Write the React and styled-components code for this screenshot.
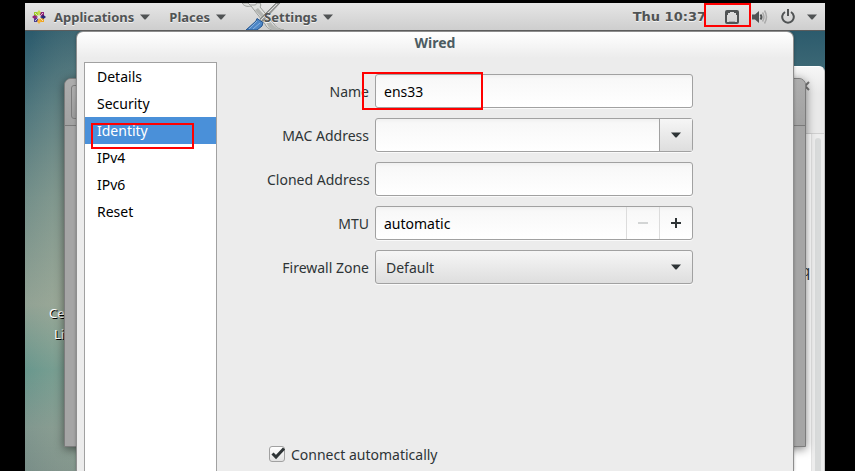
import React, { useState } from 'react';
import styled, { createGlobalStyle } from 'styled-components';


//<---Styling--->
const GlobalStyle = createGlobalStyle`
    * {
        box-sizing: border-box;
    }
    body {
        margin: 0;
        background: #000;
        font-family: 'Noto Sans', 'Open Sans', sans-serif;
        font-size: 14px;
        color: #2e3436;
    }
    button, input, select {
        font: inherit;
        color: inherit;
        margin: 0;
    }
`;
const Screen = styled.div`
    height: 100vh;
    padding: 3px 30px 0 25px;
    display: flex;
    flex-direction: column;
    overflow: hidden;
`;
const TopBar = styled.header`
    height: 28px;
    flex: none;
    padding: 0 8px 0 7px;
    display: flex;
    justify-content: space-between;
    align-items: stretch;
    background: linear-gradient(#e6e6e6, #cecece);
    border-bottom: 1px solid #5c5c5c;
    color: #505354;
    font-size: 13px;
    text-shadow: 0 1px #f2f2f2;
`;
const BarGroup = styled.nav`
    display: flex;
    align-items: center;
`;
const BarButton = styled.button`
    position: relative;
    height: 27px;
    padding: 0;
    margin-right: ${({ $gap }) => $gap || 0}px;
    border: 0;
    background: none;
    font-weight: bold;
    text-shadow: inherit;
    white-space: nowrap;
    display: flex;
    align-items: center;
    gap: 6px;
`;
const ClockButton = styled(BarButton)`
    font-family: 'DejaVu Sans', sans-serif;
`;
const LogoHolder = styled.span`
    display: flex;
    padding-right: 2px;
`;
const BarText = styled.span`
    position: relative;
`;
const ToolsArt = styled.svg`
    position: absolute;
    left: -22px;
    top: 0;
`;
const Desktop = styled.main`
    position: relative;
    flex: 1;
    overflow: hidden;
    background:
        radial-gradient(ellipse 60px 340px at 50px 240px, rgba(176, 184, 160, 0.45), transparent),
        linear-gradient(#2c5b6d, #4c747c 17%, #6f8c88 38%, #8fa093 62%, #64958c 77%, #7f968e 90%, #798e88);
`;
const DesktopLabel = styled.div`
    position: absolute;
    left: 24px;
    top: 272px;
    font-size: 13px;
    line-height: 21px;
    color: #fff;
    text-shadow: 1px 1px #000;
    span {
        display: block;
    }
    span + span {
        padding-left: 5px;
    }
`;
const RearWindow = styled.section`
    position: absolute;
    left: 420px;
    right: 0;
    top: 35px;
    bottom: 0;
    display: flex;
    flex-direction: column;
    border-radius: 6px 6px 0 0;
    border: 1px solid #c8c8c8;
    border-top-color: #fff;
    border-bottom: 0;
    background: #fff;
    overflow: hidden;
`;
const RearHeader = styled.div`
    height: 67px;
    flex: none;
    display: flex;
    justify-content: flex-end;
    padding: 14px 14px 0;
    background: linear-gradient(#f6f6f6, #e9e9e9 40%);
    border-bottom: 1px solid #d0d0d0;
`;
const CloseButton = styled.button`
    width: 10px;
    height: 10px;
    padding: 0;
    border: 0;
    background: none;
    display: flex;
`;
const RearBody = styled.div`
    flex: 1;
    display: flex;
    justify-content: flex-end;
`;
const RearText = styled.span`
    padding: 127px 1px 0 0;
`;
const Trough = styled.div`
    width: 13px;
    padding: 4px 3px 0;
    background: #ededed;
    border-left: 1px solid #e2e2e2;
    display: flex;
`;
const Thumb = styled.div`
    flex: 1;
    border-radius: 4px 4px 0 0;
    background: #d8dada;
`;
const GreyWindow = styled.section`
    position: absolute;
    left: 39px;
    right: 19px;
    top: 47px;
    height: 369px;
    border: 1px solid #7c7c7c;
    border-radius: 7px 7px 0 0;
    background: #a5a5a5;
    box-shadow: 0 2px 10px rgba(0, 0, 0, 0.5);
    overflow: hidden;
`;
const GreyHeader = styled.div`
    height: 47px;
    padding: 6px;
    background: linear-gradient(#adadad, #a2a2a2);
    border-bottom: 1px solid #7a7a7a;
`;
const GreyButton = styled.button`
    display: block;
    width: 34px;
    height: 34px;
    border: 1px solid #7c7c7c;
    border-radius: 3px;
    background: linear-gradient(#aeaeae, #9c9c9c);
`;
const Dialog = styled.section`
    position: absolute;
    left: 51px;
    right: 31px;
    top: 0;
    bottom: 0;
    display: flex;
    flex-direction: column;
    border: 1px solid #8e8e8e;
    border-bottom: 0;
    border-radius: 7px 7px 0 0;
    background: linear-gradient(#fff, #ececec 26px);
    box-shadow: 0 0 3px rgba(0, 0, 0, 0.3);
`;
const Title = styled.h1`
    margin: 0;
    height: 30px;
    line-height: 22px;
    font-size: 14px;
    text-align: center;
    color: #4c5c62;
`;
const DialogBody = styled.div`
    flex: 1;
    display: flex;
    padding-left: 7px;
`;
const Sidebar = styled.ul`
    width: 133px;
    flex: none;
    margin: 0;
    padding: 0;
    list-style: none;
    background: #fff;
    border: 1px solid #a1a1a1;
    border-bottom: 0;
`;
const SideItem = styled.li`
    position: relative;
    background: ${({ $active }) => ($active ? '#4a90d9' : 'transparent')};
`;
const SideButton = styled.button`
    display: block;
    width: 100%;
    height: 27px;
    padding: 0 12px;
    border: 0;
    background: none;
    text-align: left;
    color: ${({ $active }) => ($active ? '#fff' : '#000')};
`;
const Form = styled.form`
    flex: 1;
    padding: 12px 100px 6px 50px;
    display: flex;
    flex-direction: column;
    justify-content: space-between;
`;
const Fields = styled.div`
    display: grid;
    grid-template-columns: 102px 1fr;
    column-gap: 6px;
    row-gap: 10px;
    align-items: center;
`;
const Label = styled.label`
    text-align: right;
    white-space: nowrap;
`;
const Box = styled.div`
    position: relative;
    height: 34px;
    display: flex;
    border: 1px solid #a1a1a1;
    border-radius: 3px;
    background: ${({ $raised }) => ($raised
        ? 'linear-gradient(#f6f6f6, #dedede)'
        : 'linear-gradient(#f0f0f0, #f8f8f8 4px, #fff)')};
    box-shadow: 0 1px #fafafa;
`;
const Input = styled.input`
    flex: 1;
    min-width: 0;
    padding: 0 8px;
    border: 0;
    outline: 0;
    background: none;
    color: #000;
`;
const Select = styled.select`
    flex: 1;
    padding: 0 10px;
    border: 0;
    outline: 0;
    appearance: none;
    background: none;
`;
const BoxButton = styled.button`
    width: 33px;
    padding: 0;
    border: 0;
    border-left: 1px solid ${({ $raised }) => ($raised ? '#a1a1a1' : '#dcdcdc')};
    background: ${({ $raised }) => ($raised ? 'linear-gradient(#f6f6f6, #dedede)' : 'none')};
    color: ${({ disabled }) => (disabled ? '#d3d5d5' : '#2e3436')};
    display: flex;
    align-items: center;
    justify-content: center;
`;
const SelectArrow = styled.span`
    position: absolute;
    right: 11px;
    top: 10px;
    pointer-events: none;
    line-height: 0;
`;
const CheckRow = styled.label`
    display: flex;
    align-items: center;
    gap: 6px;
    height: 22px;
    padding-left: 2px;
`;
const CheckHolder = styled.span`
    position: relative;
    display: flex;
    svg {
        position: absolute;
        left: 0;
        top: 0;
        pointer-events: none;
    }
`;
const Checkbox = styled.input`
    width: 16px;
    height: 16px;
    appearance: none;
    border: 1px solid #a1a1a1;
    border-radius: 3px;
    background: linear-gradient(#fff, #e2e2e2);
`;
const Highlight = styled.span`
    position: absolute;
    z-index: 2;
    left: ${({ $left }) => $left}px;
    top: ${({ $top }) => $top}px;
    width: ${({ $width }) => $width}px;
    height: ${({ $height }) => $height}px;
    border: 2px solid #f00;
    pointer-events: none;
`;
//<---Styling ending--->


const Arrow = () => (
    <svg width="10" height="12" viewBox="0 0 10 12" aria-hidden="true">
        <path d="M0 3.5h10L5.500 8.500h-1z" fill="currentColor" />
    </svg>
);

const CentosLogo = () => (
    <svg width="14" height="14" viewBox="0 0 14 14" aria-hidden="true">
        <path d="M2 2h4v4H2z" fill="#9ccd2a" />
        <path d="M8 2h4v4H8z" fill="#932279" />
        <path d="M8 8h4v4H8z" fill="#efa724" />
        <path d="M2 8h4v4H2z" fill="#4a3f94" />
        <path d="M7 0l2 2.500L7 6 5 2.500z" fill="#c3d94e" />
        <path d="M14 7l-2.500 2L8 7l3.500-2z" fill="#262577" />
        <path d="M7 14l-2-2.500L7 8l2 3.500z" fill="#f3b43c" />
        <path d="M0 7l2.500-2L6 7 2.500 9z" fill="#932279" />
        <path d="M3 3l8 8M11 3l-8 8" stroke="#e8e8e8" strokeWidth="0.8" />
    </svg>
);

const Tools = () => (
    <ToolsArt width="42" height="27" viewBox="0 0 42 27" aria-hidden="true">
        <path d="M0 0c2 3 5 4 9 3l14 18c1 3 4 5 7 6h12c-6-1-8-3-10-6L18 4c1-1 1-3 0-4h-4c1 1 0 2-2 2H8L6 0z" fill="#e0e1df" stroke="#9b9d9a" />
        <path d="M16 5l15 17c3 3 6 4 10 5H31c-3-1-5-3-6-6L13 7z" fill="#b4b6b3" />
        <path d="M34 0h4L21 18l-3-2z" fill="#9a9c9a" stroke="#767876" strokeWidth="0.7" />
        <path d="M35 1L19 17" stroke="#dfdfdf" />
        <path d="M15 15.500l6 4-1 3.500-5 4H4l10-9z" fill="#4d86c6" stroke="#23558f" />
        <path d="M15 18l-8 8M18 20l-7 6" stroke="#89b2df" />
    </ToolsArt>
);

const NetworkIcon = () => (
    <svg width="14" height="14" viewBox="0 0 14 14" aria-hidden="true">
        <rect x="1" y="1" width="12" height="12" rx="1" fill="none" stroke="currentColor" strokeWidth="2" />
        <path d="M2 2h3v1H3v2H2zM12 2H9v1h2v2h1z" fill="currentColor" />
        <path d="M4 11.5h6" stroke="#aaa" />
    </svg>
);

const VolumeIcon = () => (
    <svg width="16" height="14" viewBox="0 0 16 14" aria-hidden="true">
        <path d="M0 4.500h3L7 1v12L3 9.500H0z" fill="currentColor" />
        <path d="M8.500 4.500q2 2.500 0 5" fill="none" stroke="currentColor" strokeWidth="2" />
        <path d="M10.500 2.500q3 4.500 0 9M12.500 0.500q4 6.500 0 13" fill="none" stroke="#aaa" strokeWidth="1.500" />
    </svg>
);

const PowerIcon = () => (
    <svg width="14" height="15" viewBox="0 0 14 15" aria-hidden="true">
        <path d="M4 3a5.800 5.800 0 1 0 6 0M7 0v7" fill="none" stroke="currentColor" strokeWidth="2" />
    </svg>
);

const PAGES = ['Details', 'Security', 'Identity', 'IPv4', 'IPv6', 'Reset'];

export default function App() {
    const [page, setPage] = useState('Identity');
    const [name, setName] = useState('ens33');
    const [mac, setMac] = useState('');
    const [cloned, setCloned] = useState('');
    const [mtu, setMtu] = useState('automatic');
    const [auto, setAuto] = useState(true);

    const sideItems = PAGES.map(item => (
        <SideItem key={item} $active={item === page}>
            <SideButton $active={item === page} onClick={() => setPage(item)}>{item}</SideButton>
            {item === 'Identity' && <Highlight $left={6} $top={6} $width={103} $height={26} />}
        </SideItem>
    ));

    return (
        <>
            <GlobalStyle />
            <Screen>
                <TopBar>
                    <BarGroup>
                        <BarButton $gap={19}><LogoHolder><CentosLogo /></LogoHolder>Applications <Arrow /></BarButton>
                        <BarButton $gap={38}>Places <Arrow /></BarButton>
                        <BarButton><Tools /><BarText>Settings</BarText> <Arrow /></BarButton>
                    </BarGroup>
                    <BarGroup>
                        <ClockButton $gap={19}>Thu 10:37</ClockButton>
                        <BarButton $gap={13} aria-label="Network">
                            <NetworkIcon />
                            <Highlight $left={-21} $top={0} $width={47} $height={24} />
                        </BarButton>
                        <BarButton $gap={13} aria-label="Volume"><VolumeIcon /></BarButton>
                        <BarButton $gap={12} aria-label="Power"><PowerIcon /></BarButton>
                        <BarButton aria-label="System menu"><Arrow /></BarButton>
                    </BarGroup>
                </TopBar>
                <Desktop>
                    <DesktopLabel><span>Ce</span><span>Li</span></DesktopLabel>
                    <RearWindow>
                        <RearHeader>
                            <CloseButton aria-label="Close">
                                <svg width="10" height="10" viewBox="0 0 10 10">
                                    <path d="M1 1l8 8M9 1l-8 8" stroke="#777" strokeWidth="2" />
                                </svg>
                            </CloseButton>
                        </RearHeader>
                        <RearBody>
                            <RearText>q</RearText>
                            <Trough><Thumb /></Trough>
                        </RearBody>
                    </RearWindow>
                    <GreyWindow>
                        <GreyHeader><GreyButton aria-label="Back" /></GreyHeader>
                    </GreyWindow>
                    <Dialog>
                        <Title>Wired</Title>
                        <DialogBody>
                            <Sidebar>{sideItems}</Sidebar>
                            <Form>
                                <Fields>
                                    <Label htmlFor="name">Name</Label>
                                    <Box>
                                        <Input id="name" value={name} onChange={e => setName(e.target.value)} />
                                        <Highlight $left={-14} $top={-3} $width={121} $height={38} />
                                    </Box>
                                    <Label htmlFor="mac">MAC Address</Label>
                                    <Box>
                                        <Input id="mac" value={mac} onChange={e => setMac(e.target.value)} />
                                        <BoxButton type="button" $raised aria-label="Choose address"><Arrow /></BoxButton>
                                    </Box>
                                    <Label htmlFor="cloned">Cloned Address</Label>
                                    <Box>
                                        <Input id="cloned" value={cloned} onChange={e => setCloned(e.target.value)} />
                                    </Box>
                                    <Label htmlFor="mtu">MTU</Label>
                                    <Box>
                                        <Input id="mtu" value={mtu} onChange={e => setMtu(e.target.value)} />
                                        <BoxButton type="button" disabled aria-label="Decrease">
                                            <svg width="10" height="10"><path d="M0 5h10" stroke="currentColor" strokeWidth="2" /></svg>
                                        </BoxButton>
                                        <BoxButton type="button" aria-label="Increase">
                                            <svg width="10" height="10"><path d="M0 5h10M5 0v10" stroke="currentColor" strokeWidth="2" /></svg>
                                        </BoxButton>
                                    </Box>
                                    <Label htmlFor="zone">Firewall Zone</Label>
                                    <Box $raised>
                                        <Select id="zone"><option>Default</option></Select>
                                        <SelectArrow><Arrow /></SelectArrow>
                                    </Box>
                                </Fields>
                                <CheckRow>
                                    <CheckHolder>
                                        <Checkbox type="checkbox" checked={auto} onChange={e => setAuto(e.target.checked)} />
                                        {auto && (
                                            <svg width="17" height="16" viewBox="0 0 17 16">
                                                <path d="M3.500 7.500l3.500 3.500 8-8.500" fill="none" stroke="#2e3436" strokeWidth="3" />
                                            </svg>
                                        )}
                                    </CheckHolder>
                                    Connect automatically
                                </CheckRow>
                            </Form>
                        </DialogBody>
                    </Dialog>
                </Desktop>
            </Screen>
        </>
    );
}
